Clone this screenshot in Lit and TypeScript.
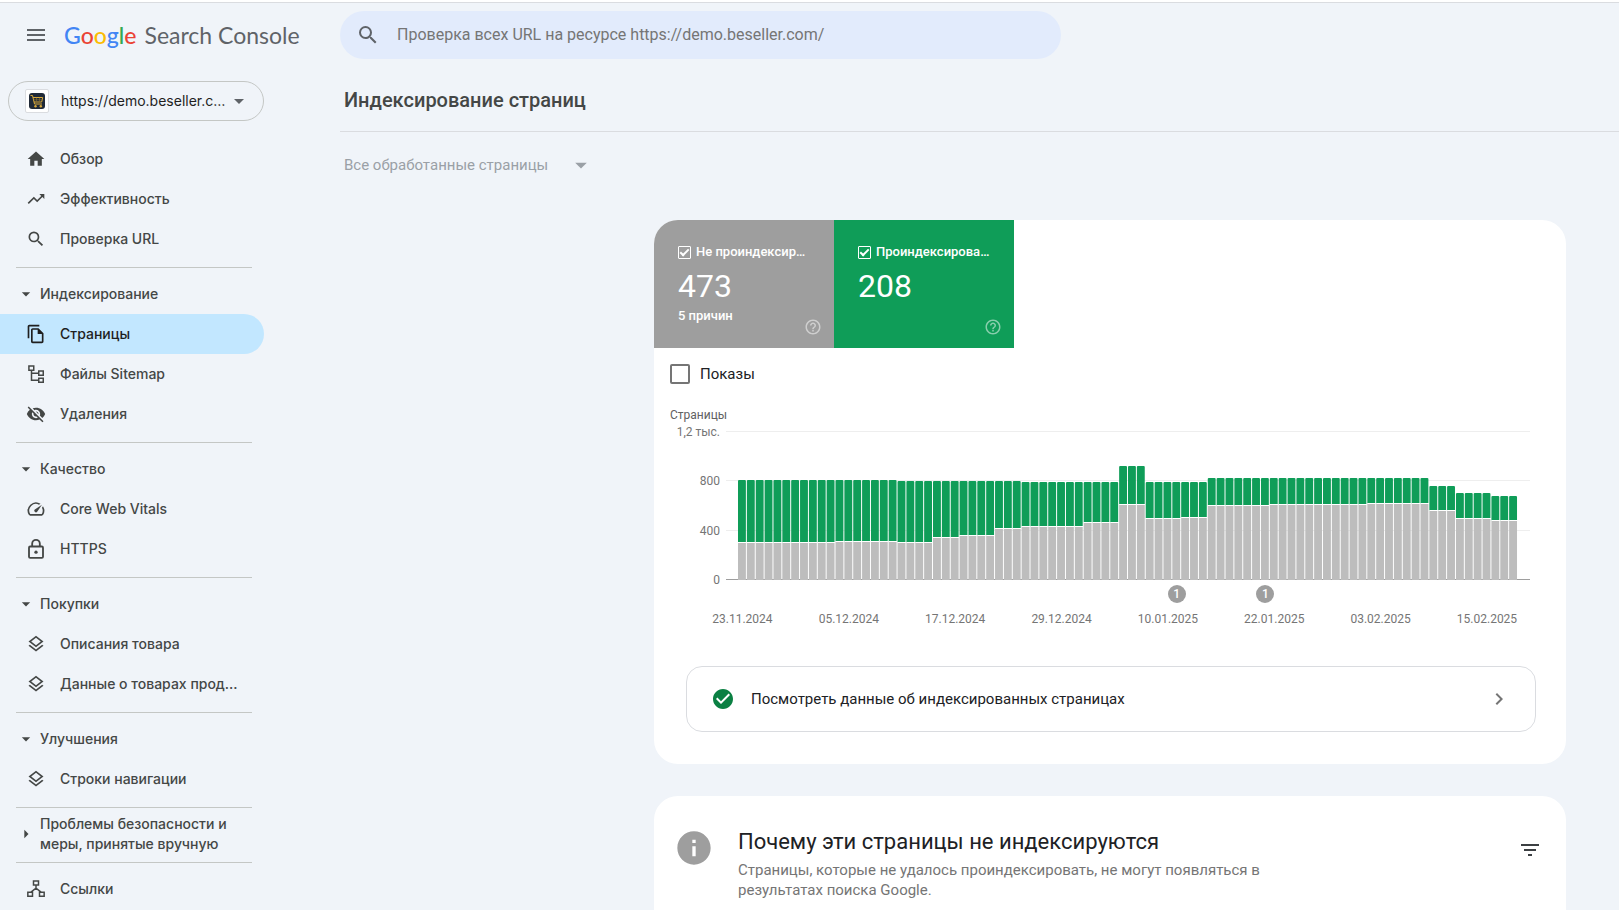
import { LitElement, html, css, svg, nothing } from "lit";
import { customElement, property } from "lit/decorators.js";
import { classMap } from "lit/directives/class-map.js";

const ICONS: Record<string, unknown> = {
  menu: svg`<path d="M3 18h18v-2H3v2zm0-5h18v-2H3v2zm0-7v2h18V6H3z"/>`,
  search: svg`<path d="M15.5 14h-.79l-.28-.27A6.471 6.471 0 0 0 16 9.5 6.5 6.5 0 1 0 9.5 16c1.61 0 3.09-.59 4.23-1.57l.27.28v.79l5 4.99L20.49 19l-4.99-5zm-6 0C7.01 14 5 11.99 5 9.5S7.01 5 9.5 5 14 7.01 14 9.5 11.99 14 9.5 14z"/>`,
  home: svg`<path d="M10 20v-6h4v6h5v-8h3L12 3 2 12h3v8z"/>`,
  trend: svg`<path d="M16 6l2.29 2.29-4.88 4.88-4-4L2 16.59 3.41 18l6-6 4 4 6.3-6.29L22 12V6z"/>`,
  pages: svg`<path d="M16 1H4c-1.1 0-2 .9-2 2v14h2V3h12V1zm-1 4H8c-1.1 0-1.99.9-1.99 2L6 21c0 1.1.89 2 1.99 2H19c1.1 0 2-.9 2-2V11l-6-6zM8 21V7h6v5h5v9H8z"/>`,
  sitemap: svg`<g fill="none" stroke="currentColor" stroke-width="1.8"><path d="M3.5 2.5h5.8v5h-5.8zM15.3 8.5h5.4v5h-5.4zM15.3 17h5.4v5h-5.4zM6.6 7.5v12h8.7M6.6 11h8.7"/></g>`,
  hidden: svg`<path d="M12 7c2.76 0 5 2.24 5 5 0 .65-.13 1.26-.36 1.83l2.92 2.92c1.51-1.26 2.7-2.89 3.43-4.75-1.73-4.39-6-7.5-11-7.5-1.4 0-2.74.25-3.98.7l2.16 2.16C10.74 7.13 11.35 7 12 7zM2 4.27l2.28 2.28.46.46A11.804 11.804 0 0 0 1 12c1.73 4.39 6 7.5 11 7.5 1.55 0 3.03-.3 4.38-.84l.42.42L19.73 22 21 20.73 3.27 3 2 4.27zM7.53 9.8l1.55 1.55c-.05.21-.08.43-.08.65 0 1.66 1.34 3 3 3 .22 0 .44-.03.65-.08l1.55 1.55c-.67.33-1.41.53-2.2.53-2.76 0-5-2.24-5-5 0-.79.2-1.53.53-2.2zm4.31-.78l3.15 3.15.02-.16c0-1.66-1.34-3-3-3l-.17.01z"/>`,
  speed: svg`<path d="M20.38 8.57l-1.23 1.85a8 8 0 0 1-.22 7.58H5.07A8 8 0 0 1 15.58 6.85l1.85-1.23A10 10 0 0 0 3.35 19a2 2 0 0 0 1.72 1h13.85a2 2 0 0 0 1.74-1 10 10 0 0 0-.27-10.44zm-9.79 6.84a2 2 0 0 0 2.83 0l5.66-8.49-8.49 5.66a2 2 0 0 0 0 2.83z"/>`,
  lock: svg`<g fill="none" stroke="currentColor" stroke-width="2.2"><rect x="3.6" y="9" width="16.8" height="13.6" rx="1.4"/><path d="M7.4 9V5.6a4.6 4.6 0 0 1 9.2 0V9"/></g><circle cx="12" cy="15.8" r="2"/>`,
  layers: svg`<path d="M11.99 18.54l-7.37-5.73L3 14.07l9 7 9-7-1.63-1.27zM12 16l7.36-5.73L21 9l-9-7-9 7 1.63 1.27L12 16zm0-11.47L17.74 9 12 13.47 6.26 9 12 4.53z"/>`,
  links: svg`<g fill="none" stroke="currentColor" stroke-width="1.8"><path d="M9 2.5h6v4.8H9zM2.2 16h5.6v4.6H2.2zM16.2 16h5.6v4.6h-5.6zM12 7.3v4.2M5.5 16L12 11l6.5 5"/></g>`,
  down: svg`<path d="M7 10l5 5 5-5z"/>`,
  right: svg`<path d="M10 17l5-5-5-5z"/>`,
  help: svg`<path d="M11 18h2v-2h-2v2zm1-16C6.48 2 2 6.48 2 12s4.48 10 10 10 10-4.48 10-10S17.52 2 12 2zm0 18c-4.41 0-8-3.59-8-8s3.59-8 8-8 8 3.59 8 8-3.59 8-8 8zm0-14c-2.21 0-4 1.79-4 4h2c0-1.1.9-2 2-2s2 .9 2 2c0 2-3 1.75-3 5h2c0-2.25 3-2.5 3-5 0-2.21-1.79-4-4-4z"/>`,
  done: svg`<path d="M12 2C6.48 2 2 6.48 2 12s4.48 10 10 10 10-4.48 10-10S17.52 2 12 2zm-2 15l-5-5 1.41-1.41L10 14.17l7.59-7.59L19 8l-9 9z"/>`,
  chevron: svg`<path d="M10 6L8.59 7.41 13.17 12l-4.58 4.59L10 18l6-6z"/>`,
  info: svg`<path d="M12 2C6.48 2 2 6.48 2 12s4.48 10 10 10 10-4.48 10-10S17.52 2 12 2zm1 15h-2v-6h2v6zm0-8h-2V7h2v2z"/>`,
  filter: svg`<path d="M10 18h4v-2h-4v2zM3 6v2h18V6H3zm3 7h12v-2H6v2z"/>`,
};

@customElement("gsc-icon")
class GscIcon extends LitElement {
  @property() name = "";
  @property({ type: Number }) size = 20;
  static styles = css`
    :host { display: inline-flex; flex: none; }
    svg { display: block; fill: currentColor; overflow: visible; }
  `;
  render() {
    return html`<svg width=${this.size} height=${this.size} viewBox="0 0 24 24" aria-hidden="true">${ICONS[this.name]}</svg>`;
  }
}

interface Section { title?: string; closed?: boolean; items: [string, string][]; }

const SECTIONS: Section[] = [
  { items: [["home", "Обзор"], ["trend", "Эффективность"], ["search", "Проверка URL"]] },
  { title: "Индексирование", items: [["pages", "Страницы"], ["sitemap", "Файлы Sitemap"], ["hidden", "Удаления"]] },
  { title: "Качество", items: [["speed", "Core Web Vitals"], ["lock", "HTTPS"]] },
  { title: "Покупки", items: [["layers", "Описания товара"], ["layers", "Данные о товарах продавцов"]] },
  { title: "Улучшения", items: [["layers", "Строки навигации"]] },
  { title: "Проблемы безопасности и меры, принятые вручную", closed: true, items: [] },
  { items: [["links", "Ссылки"]] },
];

@customElement("gsc-nav")
class GscNav extends LitElement {
  static styles = css`
    :host { display: block; color: #444746; font: 500 14px/20px Inter, "Noto Sans", sans-serif; }
    .section { padding-bottom: 8px; }
    .section + .section { padding-top: 6px; }
    .section + .section::before {
      content: ""; display: block; height: 1px; margin: -6px 12px 6px 16px; background: #c4c7c5;
    }
    .item, .group {
      display: flex; align-items: center; min-height: 40px; box-sizing: border-box; width: 100%;
      color: inherit; text-decoration: none; font: inherit; text-align: left;
      border: 0; background: none; border-radius: 0 20px 20px 0;
    }
    .item { gap: 14px; padding: 0 24px 0 26px; }
    .group { gap: 4px; padding: 0 20px 0 16px; }
    .label { min-width: 0; overflow: hidden; text-overflow: ellipsis; white-space: nowrap; }
    .active { background: #c2e7ff; color: #1f1f1f; }
  `;
  render() {
    return html`<nav aria-label="Разделы">${SECTIONS.map((s) => html`
      <div class="section">
        ${s.title ? html`<button class="group" aria-expanded=${s.closed ? "false" : "true"}>
          <gsc-icon name=${s.closed ? "right" : "down"}></gsc-icon><span>${s.title}</span></button>` : nothing}
        ${s.items.map(([icon, label]) => html`
          <a href="#" class=${classMap({ item: true, active: icon === "pages" })}>
            <gsc-icon name=${icon}></gsc-icon><span class="label">${label}</span></a>`)}
      </div>`)}</nav>`;
  }
}

/* Runs of equal days: [number of days, height of the whole bar, height of the grey part]. */
const RUNS: [number, number, number][] = [
  [11, 100, 37], [7, 100, 38], [4, 99, 37], [3, 99, 42], [4, 99, 44], [3, 99, 51], [7, 98, 53],
  [4, 98, 57], [3, 114, 75], [4, 98, 61], [3, 98, 62], [7, 102, 74], [11, 102, 75], [7, 102, 76],
  [3, 94, 69], [4, 87, 61], [3, 84, 59],
];
const DAYS = RUNS.flatMap(([n, total, grey]) => Array.from({ length: n }, () => ({ total, grey })));
const PLOT = 149;
const DATES = ["23.11.2024", "05.12.2024", "17.12.2024", "29.12.2024", "10.01.2025", "22.01.2025", "03.02.2025", "15.02.2025"];

@customElement("gsc-chart")
class GscChart extends LitElement {
  static styles = css`
    :host { display: block; color: #757575; font: 12px/16px Roboto, sans-serif; padding: 23px 36px 0 16px; }
    .caption { color: #616161; }
    .chart { display: grid; grid-template-columns: 50px 1fr; column-gap: 6px; margin-top: 8px; }
    .scale { display: flex; flex-direction: column; justify-content: space-between; text-align: right; margin: -7px 0 -8px; }
    .plot { display: grid; height: 149px; }
    .lines, .bars { grid-area: 1 / 1; }
    .lines { display: flex; flex-direction: column; justify-content: space-between; }
    .line { height: 1px; background: #eee; }
    .line:last-child { background: #9e9e9e; }
    .bars { padding: 0 12px; min-width: 0; }
    .bars svg { display: block; width: 100%; height: 149px; }
    .green { fill: #0f9d58; }
    .grey { fill: #bdbdbd; }
    .gap { fill: #fff; }
    .axis {
      grid-column: 2; padding: 5px 12px 0; display: grid;
      grid-template-columns: repeat(88, minmax(0, 1fr)); row-gap: 8px;
    }
    .tick { display: flex; justify-content: center; white-space: nowrap; }
    .date { grid-row: 2; }
    .badge {
      flex: none; width: 18px; height: 18px; border-radius: 50%; background: #9e9e9e; color: #fff;
      text-align: center; font-weight: 500; line-height: 18px;
    }
    .c1 { grid-column: 1; } .c2 { grid-column: 13; } .c3 { grid-column: 25; } .c4 { grid-column: 37; }
    .c5 { grid-column: 49; } .c6 { grid-column: 61; } .c7 { grid-column: 73; } .c8 { grid-column: 85; }
    .n1 { grid-column: 50; grid-row: 1; } .n2 { grid-column: 60; grid-row: 1; }
  `;
  render() {
    return html`
      <div class="caption">Страницы</div>
      <div class="chart">
        <div class="scale"><span>1,2 тыс.</span><span>800</span><span>400</span><span>0</span></div>
        <div class="plot">
          <div class="lines"><div class="line"></div><div class="line"></div><div class="line"></div><div class="line"></div></div>
          <div class="bars">
            <svg viewBox="0 0 88 149" preserveAspectRatio="none" role="img" aria-label="Страницы по дням">
              ${DAYS.map((d, i) => svg`
                <rect class="green" x=${i} y=${PLOT - d.total} width="0.89" height=${d.total - d.grey} rx="0.12" ry="1"/>
                <rect class="gap" x=${i} y=${PLOT - d.grey - 1} width="1" height="1"/>
                <rect class="grey" x=${i} y=${PLOT - d.grey} width="0.89" height=${d.grey}/>`)}
            </svg>
          </div>
        </div>
        <div class="axis">
          <div class="tick n1"><span class="badge">1</span></div>
          <div class="tick n2"><span class="badge">1</span></div>
          ${DATES.map((d, i) => html`<div class="tick date c${i + 1}">${d}</div>`)}
        </div>
      </div>`;
  }
}

@customElement("app-root")
class AppRoot extends LitElement {
  static styles = css`
    :host {
      display: flex; flex-direction: column; height: 100vh; overflow: hidden; box-sizing: border-box;
      background: #f0f4f9; border-top: 2px solid #fff; font: 15px/20px Roboto, sans-serif; color: #202124;
    }
    button, input, select { font: inherit; color: inherit; }
    button { cursor: pointer; }
    .top {
      display: grid; grid-template-columns: 340px 1fr; align-items: center;
      border-top: 1px solid #dadce0; padding: 8px 0 10px; flex: none;
    }
    .brand { display: flex; align-items: center; padding-left: 24px; }
    .icon-button { display: flex; padding: 0; border: 0; background: none; color: #5f6368; }
    .logo {
      display: flex; gap: 8px; margin-left: 16px; color: #5f6368; text-decoration: none;
      font: 23px/28px Lato, sans-serif;
    }
    .google { font-weight: 500; }
    .b { color: #4285f4; } .r { color: #ea4335; } .y { color: #fbbc04; } .g { color: #34a853; }
    .search {
      display: flex; align-items: center; gap: 17px; height: 48px; box-sizing: border-box;
      width: 721px; max-width: 100%; padding: 0 24px 0 16px; border-radius: 24px;
      background: #e2ebfc; color: #5f6368;
    }
    .search input { flex: 1; min-width: 0; border: 0; padding: 0; background: none; outline: 0; font-size: 16px; }
    .search input::placeholder { color: #757575; opacity: 1; }
    .body { display: grid; grid-template-columns: 340px 1fr; flex: 1; min-height: 0; }
    .side { width: 264px; }
    .property {
      display: flex; align-items: center; height: 40px; width: 256px; box-sizing: border-box;
      margin: 12px 0 18px 8px; padding: 0 12px 0 16px; border: 1px solid #c4c7c5; border-radius: 20px;
      background: none; color: #1f1f1f; font: 14px/20px Inter, sans-serif; text-align: left;
    }
    .favicon { flex: none; background: #fff; border: 1px solid #dadce0; border-radius: 2px; }
    .property-name {
      flex: 1; min-width: 0; margin-left: 12px;
      overflow: hidden; text-overflow: ellipsis; white-space: nowrap;
    }
    .caret { color: #5f6368; }
    .main { display: flex; flex-direction: column; min-width: 0; }
    h1, h2, p { margin: 0; }
    h1 {
      padding: 19px 4px; border-bottom: 1px solid #dadce0; color: #444746;
      font: 500 20px/24px Roboto, sans-serif;
    }
    .filter { display: flex; align-items: center; height: 66px; padding-left: 4px; color: #9aa0a6; }
    .filter select { appearance: none; border: 0; padding: 0; background: none; opacity: 1; width: 223px; }
    .cards { display: flex; flex-direction: column; gap: 32px; flex: 1; padding: 22px 53px 0 314px; }
    .card { background: #fff; border-radius: 24px; overflow: hidden; }
    .coverage { padding-bottom: 32px; }
    .tiles { display: flex; }
    .tile {
      display: grid; grid-template: 16px 48px 16px 1fr / minmax(0, 1fr); box-sizing: border-box;
      width: 180px; height: 128px; padding: 24px 12px 12px 24px; color: #fff;
      font: 500 13px/16px Roboto, sans-serif;
    }
    .tile-grey { background: #9e9e9e; }
    .tile-green { background: #0f9d58; }
    .tile-label { display: flex; align-items: center; gap: 5px; padding-right: 12px; min-width: 0; }
    .tile-name { min-width: 0; overflow: hidden; text-overflow: ellipsis; white-space: nowrap; }
    .tile-value { font-size: 32px; line-height: 52px; font-weight: 400; }
    .tile-note { grid-area: 3 / 1; }
    .tile-help { grid-area: 3 / 1 / 5 / 2; justify-self: end; align-self: end; opacity: .5; }
    input[type="checkbox"] { appearance: none; flex: none; margin: 0; box-sizing: border-box; display: grid; place-items: center; }
    .tile-box { width: 13px; height: 13px; border: 1px solid #fff; border-radius: 1px; }
    .tile-box:checked::before {
      content: ""; width: 7px; height: 3px; margin-top: -2px;
      border: solid #fff; border-width: 0 0 2px 2px; transform: rotate(-45deg);
    }
    .views { display: flex; align-items: center; gap: 10px; width: max-content; padding: 16px 16px 0; }
    .views-box { width: 20px; height: 20px; border: 2px solid #757575; border-radius: 2px; }
    .indexed {
      display: flex; align-items: center; gap: 16px; height: 66px; box-sizing: border-box;
      margin: 39px 30px 0 32px; padding: 0 24px; border: 1px solid #dadce0; border-radius: 16px;
      color: inherit; text-decoration: none;
    }
    .ok { color: #0b8043; }
    .grow { flex: 1; }
    .more { color: #757575; }
    .why { display: flex; align-items: flex-start; flex: 1; padding: 32px 24px 0 20px; border-radius: 24px 24px 0 0; }
    .why-text { flex: 1; margin-left: 24px; }
    .info { color: #9e9e9e; }
    h2 { font: 22px/28px Roboto, sans-serif; }
    .why p { max-width: 540px; margin-top: 4px; color: #757575; }
    .filter-button { margin-top: 10px; color: #3c4043; }
  `;
  render() {
    return html`
      <header class="top">
        <div class="brand">
          <button class="icon-button" aria-label="Меню"><gsc-icon name="menu" size="24"></gsc-icon></button>
          <a class="logo" href="#"><span class="google"><span class="b">G</span><span class="r">o</span><span class="y">o</span><span class="b">g</span><span class="g">l</span><span class="r">e</span></span><span>Search Console</span></a>
        </div>
        <label class="search">
          <gsc-icon name="search" size="24"></gsc-icon>
          <input type="text" aria-label="Проверка URL" placeholder="Проверка всех URL на ресурсе https://demo.beseller.com/">
        </label>
      </header>
      <div class="body">
        <aside class="side">
          <button class="property" aria-haspopup="listbox">
            <svg class="favicon" width="22" height="22" viewBox="0 0 22 22" aria-hidden="true">
              <rect x="3" y="3" width="16" height="16" rx="3" fill="#1f2937"/>
              <path d="M4.500 5.500h2l2 8.500h7.500M7 7.500h9.700l-1 4.500H8" fill="none" stroke="#d9a93a" stroke-width="1"/>
              <path d="M10.500 7.800v4M13.500 7.800v4M7.600 9.800h8.800" fill="none" stroke="#8f7431" stroke-width=".6"/>
              <circle cx="9.500" cy="16.300" r="1.200" fill="#d9a93a"/><circle cx="14.800" cy="16.300" r="1.200" fill="#d9a93a"/>
            </svg>
            <span class="property-name">https://demo.beseller.com/</span>
            <gsc-icon class="caret" name="down" size="24"></gsc-icon>
          </button>
          <gsc-nav></gsc-nav>
        </aside>
        <main class="main">
          <h1>Индексирование страниц</h1>
          <div class="filter">
            <select aria-label="Страницы в отчёте"><option>Все обработанные страницы</option></select>
            <gsc-icon name="down" size="28"></gsc-icon>
          </div>
          <div class="cards">
            <section class="card coverage">
              <div class="tiles">
                <div class="tile tile-grey">
                  <label class="tile-label"><input class="tile-box" type="checkbox" checked><span class="tile-name">Не проиндексировано</span></label>
                  <span class="tile-value">473</span>
                  <span class="tile-note">5 причин</span>
                  <gsc-icon class="tile-help" name="help" size="18"></gsc-icon>
                </div>
                <div class="tile tile-green">
                  <label class="tile-label"><input class="tile-box" type="checkbox" checked><span class="tile-name">Проиндексировано</span></label>
                  <span class="tile-value">208</span>
                  <gsc-icon class="tile-help" name="help" size="18"></gsc-icon>
                </div>
              </div>
              <label class="views"><input class="views-box" type="checkbox">Показы</label>
              <gsc-chart></gsc-chart>
              <a class="indexed" href="#">
                <gsc-icon class="ok" name="done" size="24"></gsc-icon>
                <span class="grow">Посмотреть данные об индексированных страницах</span>
                <gsc-icon class="more" name="chevron" size="24"></gsc-icon>
              </a>
            </section>
            <section class="card why">
              <gsc-icon class="info" name="info" size="40"></gsc-icon>
              <div class="why-text">
                <h2>Почему эти страницы не индексируются</h2>
                <p>Страницы, которые не удалось проиндексировать, не могут появляться в результатах поиска Google.</p>
              </div>
              <button class="icon-button filter-button" aria-label="Фильтр"><gsc-icon name="filter" size="24"></gsc-icon></button>
            </section>
          </div>
        </main>
      </div>`;
  }
}
